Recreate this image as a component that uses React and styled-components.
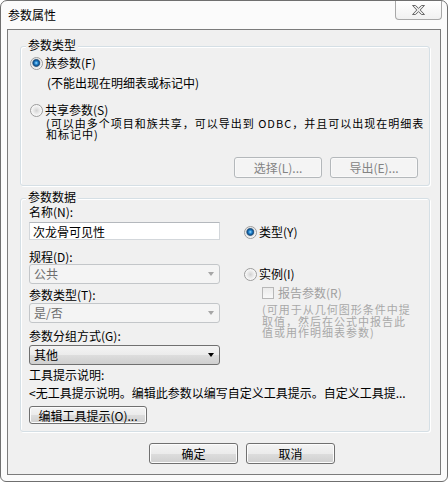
import React from "react"
import styled, { createGlobalStyle } from "styled-components"

const font = `"Noto Sans CJK SC", "Noto Sans", sans-serif`

const GlobalStyle = createGlobalStyle`
  html, body { margin: 0; padding: 0; background: #ffffff; }
  * { box-sizing: border-box; }
`

const Window = styled.div`
  width: 448px;
  height: 482px;
  border: 1px solid #6f6f6f;
  border-radius: 7px 7px 6px 6px;
  background: #fbfbfb;
  display: flex;
  flex-direction: column;
  overflow: hidden;
  font-family: ${font};
  font-size: 12px;
  color: #000;
`

const TitleBar = styled.div`
  height: 28px;
  flex: none;
  display: flex;
  justify-content: space-between;
  align-items: flex-start;
  padding: 0 5px 0 7px;
`

const Title = styled.span`
  line-height: 28px;
`

const CloseButton = styled.div`
  width: 47px;
  height: 19px;
  border: 1px solid #a8a8a8;
  border-top: none;
  border-radius: 0 0 4px 4px;
  background: linear-gradient(#ffffff, #f1f1f1);
  display: flex;
  align-items: center;
  justify-content: center;
`

const Client = styled.div`
  flex: 1;
  margin: 0 6px 6px;
  border: 1px solid #7b7b7b;
  background: #f0f0f0;
  padding: 0 10px 0 12px;
  display: flex;
  flex-direction: column;
`

const Group = styled.div`
  margin-top: ${p => p.$top}px;
  border: 1px solid #d5dfe5;
  border-radius: 3px;
  box-shadow: inset 1px 1px 0 #ffffff, 1px 1px 0 #ffffff;
  display: flex;
  flex-direction: column;
`

const Legend = styled.span`
  align-self: flex-start;
  margin: -9px 0 0 5px;
  padding: 0 2px;
  background: #f0f0f0;
  line-height: 14px;
`

const GroupBody = styled.div`
  display: flex;
  flex-direction: column;
  padding: ${p => p.$top}px 11px 7px ${p => p.$left}px;
`

const OptionRow = styled.div`
  display: flex;
  align-items: center;
  gap: 2px;
  line-height: 14px;
  margin-top: ${p => p.$top || 0}px;
`

const RadioDot = styled.span`
  flex: none;
  width: 13px;
  height: 13px;
  border-radius: 50%;
  border: 1px solid #9c9c9c;
  background: ${p =>
    p.$checked
      ? "radial-gradient(circle at 48% 45%, #a8e2ff 0, #2d90da 1.4px, #0c4d88 3px, #47698a 3.6px, #e2e2e2 4.3px, #fdfdfd 6px)"
      : "radial-gradient(circle, #d2d2d2 0, #e6e6e6 2.5px, #fdfdfd 6px)"};
`

const Note = styled.div`
  padding-left: ${p => p.$indent}px;
  margin-top: ${p => p.$top}px;
  line-height: ${p => p.$lh}px;
  font-size: ${p => (p.$tight ? 11 : 12)}px;
  letter-spacing: ${p => (p.$tight ? 1 : 0)}px;
  color: ${p => p.$color || "#000"};
  white-space: nowrap;
`

const ButtonRow = styled.div`
  display: flex;
  gap: 8px;
  justify-content: ${p => (p.$end ? "flex-end" : "flex-start")};
  margin-top: ${p => p.$top}px;
  padding-left: ${p => p.$left || 0}px;
`

const Button = styled.div`
  width: ${p => p.$w}px;
  height: ${p => p.$h}px;
  border-radius: 3px;
  display: flex;
  align-items: center;
  justify-content: center;
  white-space: nowrap;
  border: 1px solid ${p => (p.$disabled ? "#b4b8bb" : "#707070")};
  background: ${p =>
    p.$disabled
      ? "#f4f4f4"
      : "linear-gradient(#f4f4f4 0%, #ebebeb 50%, #dddddd 51%, #cfcfcf 100%)"};
  color: ${p => (p.$disabled ? "#838383" : "#000")};
  box-shadow: inset 0 0 0 1px ${p => (p.$disabled ? "#f9f9f9" : "#fcfcfc")};
`

const Fields = styled.div`
  display: grid;
  grid-template-columns: 191px 1fr;
  column-gap: 24px;
`

const Column = styled.div`
  display: flex;
  flex-direction: column;
`

const Label = styled.div`
  line-height: 14px;
  white-space: nowrap;
  margin-top: ${p => p.$top || 0}px;
`

const TextBox = styled.input`
  width: 191px;
  height: 18px;
  margin-top: 3px;
  padding: 0 3px;
  border: 1px solid #d3d7db;
  border-top-color: #b4b8bd;
  background: #ffffff;
  font-family: ${font};
  font-size: 12px;
  color: #000;
  outline: none;
`

const Select = styled.div`
  height: 20px;
  margin-top: ${p => p.$top}px;
  padding: 0 5px 0 4px;
  display: flex;
  align-items: center;
  justify-content: space-between;
  border-radius: 3px;
  border: 1px solid ${p => (p.$disabled ? "#c3c6c9" : "#707070")};
  background: ${p =>
    p.$disabled
      ? "#f4f4f4"
      : "linear-gradient(#f4f4f4 0%, #ebebeb 50%, #dddddd 51%, #cfcfcf 100%)"};
  color: ${p => (p.$disabled ? "#6d6d6d" : "#000")};
  line-height: 14px;
`

const Arrow = styled.span`
  width: 0;
  height: 0;
  border-left: 3.5px solid transparent;
  border-right: 3.5px solid transparent;
  border-top: 4px solid ${p => (p.$disabled ? "#a6a6a6" : "#000")};
`

const CheckRow = styled.div`
  display: flex;
  align-items: center;
  gap: 4px;
  padding-left: 18px;
  margin-top: 5px;
  line-height: 13px;
  color: #a0a0a0;
`

const CheckBox = styled.span`
  flex: none;
  width: 12px;
  height: 12px;
  border: 1px solid #b7b7b7;
  background: linear-gradient(#ebebeb, #f8f8f8);
`

const CloseGlyph = () => (
  <svg width="13" height="10" viewBox="0 0 13 10">
    <polygon
      points="0.5,0.5 3.5,0.5 6.5,3.3 9.5,0.5 12.5,0.5 8.2,5 12.5,9.5 9.5,9.5 6.5,6.7 3.5,9.5 0.5,9.5 4.8,5"
      fill="#e9e9e9"
      stroke="#6a6a6a"
      strokeWidth="1"
      strokeLinejoin="round"
    />
  </svg>
)

const Option = ({ checked, top, children }) => (
  <OptionRow $top={top}>
    <RadioDot $checked={checked} />
    <span>{children}</span>
  </OptionRow>
)

const Dropdown = ({ value, disabled, top }) => (
  <Select $disabled={disabled} $top={top}>
    <span>{value}</span>
    <Arrow $disabled={disabled} />
  </Select>
)

export default function App() {
  return (
    <>
      <GlobalStyle />
      <Window>
        <TitleBar>
          <Title>参数属性</Title>
          <CloseButton>
            <CloseGlyph />
          </CloseButton>
        </TitleBar>
        <Client>
          <Group $top={16}>
            <Legend>参数类型</Legend>
            <GroupBody $top={4} $left={9}>
              <Option checked>族参数(F)</Option>
              <Note $indent={17} $top={6} $lh={14}>
                (不能出现在明细表或标记中)
              </Note>
              <Option top={13}>共享参数(S)</Option>
              <Note $indent={16} $top={1} $lh={11} $tight>
                (可以由多个项目和族共享，可以导出到 ODBC，并且可以出现在明细表
                <br />
                和标记中)
              </Note>
              <ButtonRow $end $top={17}>
                <Button $w={88} $h={21} $disabled>选择(L)...</Button>
                <Button $w={88} $h={21} $disabled>导出(E)...</Button>
              </ButtonRow>
            </GroupBody>
          </Group>

          <Group $top={12}>
            <Legend>参数数据</Legend>
            <GroupBody $top={1} $left={8}>
              <Fields>
                <Column>
                  <Label>名称(N):</Label>
                  <TextBox readOnly value="次龙骨可见性" />
                  <Label $top={10}>规程(D):</Label>
                  <Dropdown value="公共" disabled top={0} />
                  <Label $top={4}>参数类型(T):</Label>
                  <Dropdown value="是/否" disabled top={1} />
                  <Label $top={6}>参数分组方式(G):</Label>
                  <Dropdown value="其他" top={2} />
                </Column>
                <Column>
                  <Option checked top={20}>类型(Y)</Option>
                  <Option top={28}>实例(I)</Option>
                  <CheckRow>
                    <CheckBox />
                    <span>报告参数(R)</span>
                  </CheckRow>
                  <Note $indent={18} $top={5} $lh={11.5} $color="#a8a8a8" $tight>
                    (可用于从几何图形条件中提
                    <br />
                    取值，然后在公式中报告此
                    <br />
                    值或用作明细表参数)
                  </Note>
                </Column>
              </Fields>
              <Label $top={3}>工具提示说明:</Label>
              <Label $top={4}>
                &lt;无工具提示说明。编辑此参数以编写自定义工具提示。自定义工具提...
              </Label>
              <ButtonRow $top={6}>
                <Button $w={118} $h={18}>编辑工具提示(O)...</Button>
              </ButtonRow>
            </GroupBody>
          </Group>

          <ButtonRow $top={11} $left={129}>
            <Button $w={89} $h={21}>确定</Button>
            <Button $w={89} $h={21}>取消</Button>
          </ButtonRow>
        </Client>
      </Window>
    </>
  )
}
